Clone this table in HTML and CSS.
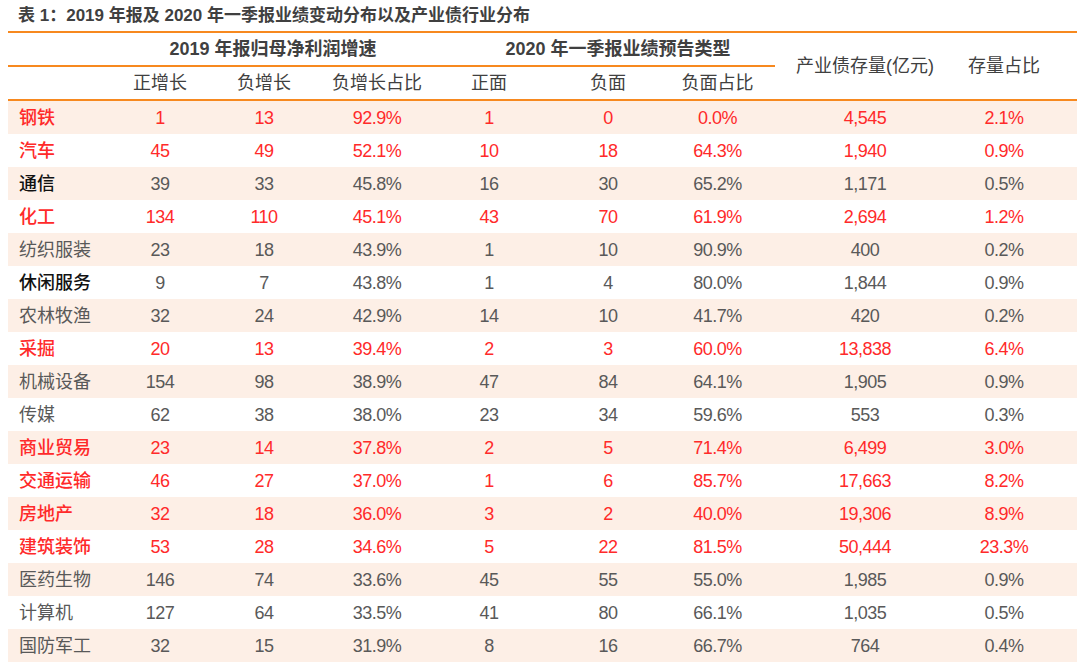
FILE: index.html
```html
<!DOCTYPE html>
<html lang="zh-CN">
<head>
<meta charset="utf-8">
<title>表 1</title>
<link rel="stylesheet" href="styles.css">
</head>
<body>
<div class="title">表 1：2019 年报及 2020 年一季报业绩变动分布以及产业债行业分布</div>
<table class="data">
  <colgroup>
    <col class="w-name"><col class="w-a"><col class="w-a"><col class="w-b"><col class="w-c"><col class="w-d"><col class="w-e"><col class="w-f"><col class="w-g">
  </colgroup>
  <thead>
    <tr class="h1">
      <th class="name"></th>
      <th colspan="3" class="grp">2019 年报归母净利润增速</th>
      <th colspan="3" class="grp grp2">2020 年一季报业绩预告类型</th>
      <th rowspan="2" class="side c7">产业债存量(亿元)</th>
      <th rowspan="2" class="side c8">存量占比</th>
    </tr>
    <tr class="h2">
      <th class="name"></th>
      <th>正增长</th><th>负增长</th><th>负增长占比</th>
      <th>正面</th><th>负面</th><th class="c6">负面占比</th>
    </tr>
  </thead>
  <tbody>
    <tr class="red"><td class="name">钢铁</td><td>1</td><td>13</td><td>92.9%</td><td>1</td><td>0</td><td class="c6">0.0%</td><td class="c7">4,545</td><td class="c8">2.1%</td></tr>
    <tr class="red"><td class="name">汽车</td><td>45</td><td>49</td><td>52.1%</td><td>10</td><td>18</td><td class="c6">64.3%</td><td class="c7">1,940</td><td class="c8">0.9%</td></tr>
    <tr class="dark"><td class="name">通信</td><td>39</td><td>33</td><td>45.8%</td><td>16</td><td>30</td><td class="c6">65.2%</td><td class="c7">1,171</td><td class="c8">0.5%</td></tr>
    <tr class="red"><td class="name">化工</td><td>134</td><td>110</td><td>45.1%</td><td>43</td><td>70</td><td class="c6">61.9%</td><td class="c7">2,694</td><td class="c8">1.2%</td></tr>
    <tr><td class="name">纺织服装</td><td>23</td><td>18</td><td>43.9%</td><td>1</td><td>10</td><td class="c6">90.9%</td><td class="c7">400</td><td class="c8">0.2%</td></tr>
    <tr class="dark"><td class="name">休闲服务</td><td>9</td><td>7</td><td>43.8%</td><td>1</td><td>4</td><td class="c6">80.0%</td><td class="c7">1,844</td><td class="c8">0.9%</td></tr>
    <tr><td class="name">农林牧渔</td><td>32</td><td>24</td><td>42.9%</td><td>14</td><td>10</td><td class="c6">41.7%</td><td class="c7">420</td><td class="c8">0.2%</td></tr>
    <tr class="red"><td class="name">采掘</td><td>20</td><td>13</td><td>39.4%</td><td>2</td><td>3</td><td class="c6">60.0%</td><td class="c7">13,838</td><td class="c8">6.4%</td></tr>
    <tr><td class="name">机械设备</td><td>154</td><td>98</td><td>38.9%</td><td>47</td><td>84</td><td class="c6">64.1%</td><td class="c7">1,905</td><td class="c8">0.9%</td></tr>
    <tr><td class="name">传媒</td><td>62</td><td>38</td><td>38.0%</td><td>23</td><td>34</td><td class="c6">59.6%</td><td class="c7">553</td><td class="c8">0.3%</td></tr>
    <tr class="red"><td class="name">商业贸易</td><td>23</td><td>14</td><td>37.8%</td><td>2</td><td>5</td><td class="c6">71.4%</td><td class="c7">6,499</td><td class="c8">3.0%</td></tr>
    <tr class="red"><td class="name">交通运输</td><td>46</td><td>27</td><td>37.0%</td><td>1</td><td>6</td><td class="c6">85.7%</td><td class="c7">17,663</td><td class="c8">8.2%</td></tr>
    <tr class="red"><td class="name">房地产</td><td>32</td><td>18</td><td>36.0%</td><td>3</td><td>2</td><td class="c6">40.0%</td><td class="c7">19,306</td><td class="c8">8.9%</td></tr>
    <tr class="red"><td class="name">建筑装饰</td><td>53</td><td>28</td><td>34.6%</td><td>5</td><td>22</td><td class="c6">81.5%</td><td class="c7">50,444</td><td class="c8">23.3%</td></tr>
    <tr><td class="name">医药生物</td><td>146</td><td>74</td><td>33.6%</td><td>45</td><td>55</td><td class="c6">55.0%</td><td class="c7">1,985</td><td class="c8">0.9%</td></tr>
    <tr><td class="name">计算机</td><td>127</td><td>64</td><td>33.5%</td><td>41</td><td>80</td><td class="c6">66.1%</td><td class="c7">1,035</td><td class="c8">0.5%</td></tr>
    <tr><td class="name">国防军工</td><td>32</td><td>15</td><td>31.9%</td><td>8</td><td>16</td><td class="c6">66.7%</td><td class="c7">764</td><td class="c8">0.4%</td></tr>
  </tbody>
</table>
</body>
</html>
```
FILE: styles.css
```css
html, body {
  margin: 0;
  padding: 0;
  background: #ffffff;
}

body {
  font-family: "Liberation Sans", "Noto Sans CJK SC", sans-serif;
  color: #595959;
}

.title {
  height: 31px;
  line-height: 32px;
  padding-left: 18px;
  font-size: 17px;
  font-weight: bold;
  color: #404040;
  white-space: nowrap;
}

.data {
  margin-left: 8px;
  width: 1069px;
  table-layout: fixed;
  border-collapse: collapse;
  border-top: 2px solid #f7891f;
}

.w-name { width: 100px; }
.w-a { width: 104px; }
.w-b { width: 122px; }
.w-c { width: 102px; }
.w-d { width: 136px; }
.w-e { width: 99px; }
.w-f { width: 180px; }
.w-g { width: 122px; }

th, td {
  padding: 0;
  text-align: center;
  vertical-align: middle;
  white-space: nowrap;
  line-height: 1;
}

th {
  font-weight: normal;
  font-size: 18px;
  color: #404040;
}

.h1 th {
  height: 32px;
  border-bottom: 2px solid #f7891f;
}

.h1 .grp {
  font-weight: bold;
  color: #404040;
}

.h1 .grp2 {
  padding-left: 23px;
}

.h2 th {
  height: 32px;
  border-bottom: 2px solid #f7891f;
}

td {
  height: 33px;
  font-size: 18px;
  letter-spacing: -0.5px;
}

tbody tr:nth-child(odd) td {
  background: #fdefe6;
}

td.name {
  text-align: left;
  padding-left: 11px;
  letter-spacing: 0;
}

.c6 { padding-right: 16px; }
.c8 { padding-right: 24px; }

tr.red td {
  color: #ff2a2a;
}

tr.red td.name {
  font-weight: 500;
}

tr.dark td.name {
  color: #111111;
  font-weight: 500;
}
```
